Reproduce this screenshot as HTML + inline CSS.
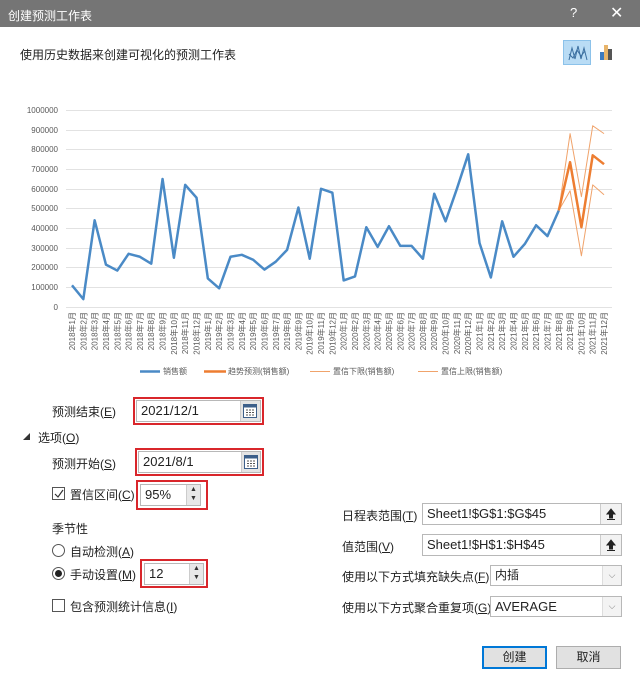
<!DOCTYPE html>
<html><head><meta charset="utf-8"><style>
*{margin:0;padding:0;box-sizing:border-box}
body{width:640px;height:680px;background:#fff;position:relative;overflow:hidden;font-family:"Liberation Sans","Noto Sans CJK SC",sans-serif;font-size:12px;color:#222}
.a{position:absolute;white-space:nowrap}
.tb{position:absolute;left:0;top:0;width:640px;height:27px;background:#757575;color:#fff}
.red{position:absolute;border:2px solid #d9262b}
.in{position:absolute;border:1px solid #b8b8b8;background:#fff;padding-left:4px;font-size:13px;line-height:19px}
.cal{position:absolute;background:#e4e4e4;border-left:1px solid #ccc}
.chk{position:absolute;width:13px;height:13px;border:1px solid #555;background:#fff}
.rad{position:absolute;width:13px;height:13px;border:1px solid #555;border-radius:50%;background:#fff}
.btn{position:absolute;background:#e1e1e1;border:1px solid #adadad;text-align:center;line-height:20px;font-size:12px}
.sp{position:absolute;width:14px;background:#e8e8e8;border-left:1px solid #ccc;font-size:7px;text-align:center;line-height:9px;color:#333}
.up{position:absolute;width:21px;height:20px;border-left:1px solid #ccc;background:#f2f2f2}
u{text-decoration:underline}
</style></head><body>
<div class="tb"><span class="a" style="left:8px;top:7px;font-size:12px">创建预测工作表</span><span class="a" style="left:570px;top:5px;font-size:13px">?</span><span class="a" style="left:610px;top:3px;font-size:16px">✕</span></div>
<div class="a" style="left:20px;top:46px">使用历史数据来创建可视化的预测工作表</div>
<div class="a" style="left:563px;top:40px;width:28px;height:25px;background:#b9dcf5;border:1px solid #8cc2ea"></div>
<svg class="a" style="left:563px;top:40px" width="60" height="26"><polyline points="6,20 9,8 12,19 15,6 18,19 21,8 24,20" fill="none" stroke="#3b6fa0" stroke-width="1"/><polyline points="6,14 10,18 14,10 18,16 22,11" fill="none" stroke="#3b6fa0" stroke-width="1"/><rect x="37" y="12" width="4" height="8" fill="#3d7bc0"/><rect x="41" y="5" width="4" height="15" fill="#e8b46a"/><rect x="45" y="9" width="4" height="11" fill="#555"/></svg>

<svg class="a" style="left:0;top:0" width="640" height="390">
<g stroke="#e2e2e2" stroke-width="1">
<line x1="66" x2="612" y1="110.5" y2="110.5"/><line x1="66" x2="612" y1="130.5" y2="130.5"/><line x1="66" x2="612" y1="149.5" y2="149.5"/><line x1="66" x2="612" y1="169.5" y2="169.5"/><line x1="66" x2="612" y1="189.5" y2="189.5"/><line x1="66" x2="612" y1="208.5" y2="208.5"/><line x1="66" x2="612" y1="228.5" y2="228.5"/><line x1="66" x2="612" y1="248.5" y2="248.5"/><line x1="66" x2="612" y1="267.5" y2="267.5"/><line x1="66" x2="612" y1="287.5" y2="287.5"/><line x1="66" x2="612" y1="307.5" y2="307.5"/>
</g>
<g font-size="8" fill="#595959" text-anchor="end" font-family="Liberation Sans,sans-serif">
<text x="58" y="113">1000000</text><text x="58" y="133">900000</text><text x="58" y="152">800000</text><text x="58" y="172">700000</text><text x="58" y="192">600000</text><text x="58" y="211">500000</text><text x="58" y="231">400000</text><text x="58" y="251">300000</text><text x="58" y="270">200000</text><text x="58" y="290">100000</text><text x="58" y="310">0</text>
</g>
<g transform="translate(72,307) scale(11.32,-0.197)" fill="none" stroke-linejoin="round">
<polyline vector-effect="non-scaling-stroke" stroke="#4a8ac6" stroke-width="2.5" points="0,110 1,40 2,440 3,215 4,185 5,270 6,255 7,220 8,650 9,250 10,620 11,555 12,145 13,95 14,255 15,265 16,240 17,190 18,230 19,290 20,505 21,245 22,600 23,580 24,135 25,155 26,405 27,305 28,410 29,310 30,310 31,245 32,575 33,435 34,600 35,775 36,325 37,150 38,435 39,255 40,320 41,415 42,360 43,490"/>
<polyline vector-effect="non-scaling-stroke" stroke="#f0a36b" stroke-width="1" points="43,490 44,880 45,560 46,920 47,880"/>
<polyline vector-effect="non-scaling-stroke" stroke="#f0a36b" stroke-width="1" points="43,490 44,590 45,260 46,620 47,570"/>
<polyline vector-effect="non-scaling-stroke" stroke="#ed7d31" stroke-width="2.5" points="43,490 44,735 45,405 46,770 47,725"/>
</g>
<g font-size="8" fill="#595959" text-anchor="end" font-family="Liberation Sans,Noto Sans CJK SC,sans-serif">
<text transform="translate(75,312) rotate(-90)">2018年1月</text><text transform="translate(86.3,312) rotate(-90)">2018年2月</text><text transform="translate(97.6,312) rotate(-90)">2018年3月</text><text transform="translate(109,312) rotate(-90)">2018年4月</text><text transform="translate(120.3,312) rotate(-90)">2018年5月</text><text transform="translate(131.6,312) rotate(-90)">2018年6月</text><text transform="translate(142.9,312) rotate(-90)">2018年7月</text><text transform="translate(154.2,312) rotate(-90)">2018年8月</text><text transform="translate(165.6,312) rotate(-90)">2018年9月</text><text transform="translate(176.9,312) rotate(-90)">2018年10月</text><text transform="translate(188.2,312) rotate(-90)">2018年11月</text><text transform="translate(199.5,312) rotate(-90)">2018年12月</text>
<text transform="translate(210.8,312) rotate(-90)">2019年1月</text><text transform="translate(222.2,312) rotate(-90)">2019年2月</text><text transform="translate(233.5,312) rotate(-90)">2019年3月</text><text transform="translate(244.8,312) rotate(-90)">2019年4月</text><text transform="translate(256.1,312) rotate(-90)">2019年5月</text><text transform="translate(267.4,312) rotate(-90)">2019年6月</text><text transform="translate(278.8,312) rotate(-90)">2019年7月</text><text transform="translate(290.1,312) rotate(-90)">2019年8月</text><text transform="translate(301.4,312) rotate(-90)">2019年9月</text><text transform="translate(312.7,312) rotate(-90)">2019年10月</text><text transform="translate(324,312) rotate(-90)">2019年11月</text><text transform="translate(335.4,312) rotate(-90)">2019年12月</text>
<text transform="translate(346.7,312) rotate(-90)">2020年1月</text><text transform="translate(358,312) rotate(-90)">2020年2月</text><text transform="translate(369.3,312) rotate(-90)">2020年3月</text><text transform="translate(380.6,312) rotate(-90)">2020年4月</text><text transform="translate(392,312) rotate(-90)">2020年5月</text><text transform="translate(403.3,312) rotate(-90)">2020年6月</text><text transform="translate(414.6,312) rotate(-90)">2020年7月</text><text transform="translate(425.9,312) rotate(-90)">2020年8月</text><text transform="translate(437.2,312) rotate(-90)">2020年9月</text><text transform="translate(448.6,312) rotate(-90)">2020年10月</text><text transform="translate(459.9,312) rotate(-90)">2020年11月</text><text transform="translate(471.2,312) rotate(-90)">2020年12月</text>
<text transform="translate(482.5,312) rotate(-90)">2021年1月</text><text transform="translate(493.8,312) rotate(-90)">2021年2月</text><text transform="translate(505.2,312) rotate(-90)">2021年3月</text><text transform="translate(516.5,312) rotate(-90)">2021年4月</text><text transform="translate(527.8,312) rotate(-90)">2021年5月</text><text transform="translate(539.1,312) rotate(-90)">2021年6月</text><text transform="translate(550.4,312) rotate(-90)">2021年7月</text><text transform="translate(561.8,312) rotate(-90)">2021年8月</text><text transform="translate(573.1,312) rotate(-90)">2021年9月</text><text transform="translate(584.4,312) rotate(-90)">2021年10月</text><text transform="translate(595.7,312) rotate(-90)">2021年11月</text><text transform="translate(607,312) rotate(-90)">2021年12月</text>
</g>
<g font-size="8" fill="#595959" font-family="Liberation Sans,Noto Sans CJK SC,sans-serif">
<line x1="140" x2="160" y1="371.5" y2="371.5" stroke="#4a8ac6" stroke-width="2.5"/><text x="163" y="374">销售额</text>
<line x1="204" x2="226" y1="371.5" y2="371.5" stroke="#ed7d31" stroke-width="2.5"/><text x="228" y="374">趋势预测(销售额)</text>
<line x1="310" x2="330" y1="371.5" y2="371.5" stroke="#f0a36b" stroke-width="1"/><text x="333" y="374">置信下限(销售额)</text>
<line x1="418" x2="438" y1="371.5" y2="371.5" stroke="#f0a36b" stroke-width="1"/><text x="441" y="374">置信上限(销售额)</text>
</g>
</svg>

<div class="a" style="left:52px;top:403px">预测结束(<u>E</u>)</div>
<div class="red" style="left:133px;top:397px;width:131px;height:28px"></div>
<div class="in" style="left:136px;top:400px;width:125px;height:22px">2021/12/1</div>
<div class="cal" style="left:240px;top:401px;width:20px;height:20px"></div>
<svg class="a" style="left:243px;top:404px" width="14" height="14"><rect x="0.5" y="0.5" width="13" height="13" fill="#fff" stroke="#3c5f8a"/><rect x="0.5" y="0.5" width="13" height="3" fill="#3c5f8a"/><path d="M3 6h2M6 6h2M9 6h2M3 8.5h2M6 8.5h2M9 8.5h2M3 11h2M6 11h2M9 11h2" stroke="#555"/></svg>

<svg class="a" style="left:22px;top:432px" width="9" height="9"><path d="M8 1V8H1Z" fill="#333"/></svg>
<div class="a" style="left:38px;top:429px">选项(<u>O</u>)</div>

<div class="a" style="left:52px;top:455px">预测开始(<u>S</u>)</div>
<div class="red" style="left:135px;top:448px;width:129px;height:28px"></div>
<div class="in" style="left:138px;top:451px;width:123px;height:22px">2021/8/1</div>
<div class="cal" style="left:241px;top:452px;width:19px;height:20px"></div>
<svg class="a" style="left:244px;top:455px" width="14" height="14"><rect x="0.5" y="0.5" width="13" height="13" fill="#fff" stroke="#3c5f8a"/><rect x="0.5" y="0.5" width="13" height="3" fill="#3c5f8a"/><path d="M3 6h2M6 6h2M9 6h2M3 8.5h2M6 8.5h2M9 8.5h2M3 11h2M6 11h2M9 11h2" stroke="#555"/></svg>

<div class="chk" style="left:52px;top:487px"></div>
<svg class="a" style="left:54px;top:489px" width="10" height="10"><path d="M1 5l3 3 5-7" fill="none" stroke="#333" stroke-width="1.2"/></svg>
<div class="a" style="left:70px;top:486px">置信区间(<u>C</u>)</div>
<div class="red" style="left:136px;top:480px;width:72px;height:30px"></div>
<div class="in" style="left:140px;top:484px;width:61px;height:22px">95%</div>
<div class="sp" style="left:186px;top:485px;height:20px">▲<br>▼</div>

<div class="a" style="left:52px;top:520px">季节性</div>
<div class="rad" style="left:52px;top:544px"></div>
<div class="a" style="left:70px;top:543px">自动检测(<u>A</u>)</div>
<div class="rad" style="left:52px;top:567px"></div>
<div class="a" style="left:55px;top:570px;width:7px;height:7px;border-radius:50%;background:#222"></div>
<div class="a" style="left:70px;top:566px">手动设置(<u>M</u>)</div>
<div class="red" style="left:140px;top:559px;width:68px;height:29px"></div>
<div class="in" style="left:144px;top:563px;width:60px;height:22px">12</div>
<div class="sp" style="left:189px;top:564px;height:20px">▲<br>▼</div>

<div class="chk" style="left:52px;top:599px"></div>
<div class="a" style="left:70px;top:598px">包含预测统计信息(<u>I</u>)</div>

<div class="a" style="left:342px;top:507px">日程表范围(<u>T</u>)</div>
<div class="in" style="left:422px;top:503px;width:200px;height:22px">Sheet1!$G$1:$G$45</div>
<div class="up" style="left:600px;top:504px"><svg width="20" height="20"><path d="M10 5L6 10H8.5V14H11.5V10H14Z M6 15.5H14" fill="#222" stroke="#222" stroke-width="1"/></svg></div>
<div class="a" style="left:342px;top:538px">值范围(<u>V</u>)</div>
<div class="in" style="left:422px;top:534px;width:200px;height:22px">Sheet1!$H$1:$H$45</div>
<div class="up" style="left:600px;top:535px"><svg width="20" height="20"><path d="M10 5L6 10H8.5V14H11.5V10H14Z M6 15.5H14" fill="#222" stroke="#222" stroke-width="1"/></svg></div>
<div class="a" style="left:342px;top:568px">使用以下方式填充缺失点(<u>F</u>)</div>
<div class="in" style="left:490px;top:565px;width:132px;height:21px;font-size:12px">内插</div>
<div class="a" style="left:602px;top:566px;width:19px;height:19px;border-left:1px solid #ddd;background:#f3f3f3;text-align:center;color:#777;font-size:9px;line-height:19px">⌵</div>
<div class="a" style="left:342px;top:599px">使用以下方式聚合重复项(<u>G</u>)</div>
<div class="in" style="left:490px;top:596px;width:132px;height:21px">AVERAGE</div>
<div class="a" style="left:602px;top:597px;width:19px;height:19px;border-left:1px solid #ddd;background:#f3f3f3;text-align:center;color:#777;font-size:9px;line-height:19px">⌵</div>

<div class="btn" style="left:482px;top:646px;width:65px;height:23px;border:2px solid #0078d7;line-height:19px">创建</div>
<div class="btn" style="left:556px;top:646px;width:65px;height:23px">取消</div>
</body></html>
